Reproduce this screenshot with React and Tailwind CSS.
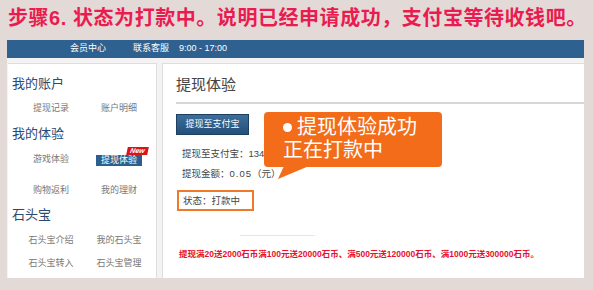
const font = { fontFamily: '"Liberation Sans", "Noto Sans CJK SC", sans-serif' };

function NavRow({ left, right, className = '' }) {
    return (
        <div className={`grid grid-cols-[68px_68px] ml-[9px] h-4 items-center text-[9px] text-[#777] ${className}`}>
            <div className="text-center">{left}</div>
            <div className="text-center">{right}</div>
        </div>
    );
}

function SideHeading({ children, className = '' }) {
    return <h3 className={`h-4 pl-[4px] text-[13px] leading-4 text-[#2c4a6e] ${className}`}>{children}</h3>;
}

export default function App() {
    return (
        <div style={font} className="w-[593px] h-[290px] bg-[#e3dad8] overflow-hidden">
            {/* 标题 */}
            <div className="h-10 pl-[8px] pt-[6px] text-[20px] leading-6 font-bold tracking-[0.55px] text-[#ea1c4f] whitespace-nowrap">
                步骤6. 状态为打款中。说明已经申请成功，支付宝等待收钱吧。
            </div>

            <div className="mx-[7px] w-[577px]">
                {/* 顶部蓝条 */}
                <div className="h-[18px] bg-[#2e6190] flex items-center pl-[63px] text-[9px] text-white">
                    <span>会员中心</span>
                    <span className="ml-[27px]">联系客服</span>
                    <span className="ml-[10px]">9:00 - 17:00</span>
                </div>

                <div className="bg-[#f4f2f2] pt-[5px] flex items-start">
                    {/* 左侧菜单 */}
                    <div className="w-[149px] ml-px bg-white border-t border-r border-[#dedede] pt-[12px] pb-[6px]">
                        <SideHeading>我的账户</SideHeading>
                        <NavRow className="mt-[9px]" left="提现记录" right="账户明细" />
                        <SideHeading className="mt-[9px]">我的体验</SideHeading>
                        <div className="grid grid-cols-[68px_68px] ml-[9px] h-4 items-center text-[9px] text-[#777] mt-[10px]">
                            <div className="text-center">游戏体验</div>
                            <div className="flex justify-center">
                                <span className="relative bg-[#2c5f8d] text-white w-[46px] h-[11px] leading-[11px] text-center">
                                    提现体验
                                    <span className="absolute left-[31px] -top-[8px] w-[21px] h-[8px] bg-[#d9131b] -skew-x-12 text-[7px] leading-[8px] font-bold italic text-white text-center">
                                        New
                                    </span>
                                </span>
                            </div>
                        </div>
                        <NavRow className="mt-[15px]" left="购物返利" right="我的理财" />
                        <SideHeading className="mt-[8px]">石头宝</SideHeading>
                        <NavRow className="mt-[10px]" left="石头宝介绍" right="我的石头宝" />
                        <NavRow className="mt-[7px]" left="石头宝转入" right="石头宝管理" />
                    </div>

                    {/* 右侧内容 */}
                    <div className="relative ml-[5px] flex-1 bg-white border-t border-l border-[#dedede] pl-[13px]">
                        <h2 className="mt-[11px] h-5 text-[15px] leading-5 text-[#444]">提现体验</h2>
                        <div className="mt-[7px] h-[2px] bg-[#d6d6d6]" />

                        <button className="mt-[10px] w-[73px] h-[21px] border border-[#1d3f60] bg-gradient-to-b from-[#3d6e9b] to-[#23507a] text-[9px] text-white">
                            提现至支付宝
                        </button>

                        <div className="ml-[6px] mt-[11px] h-4 leading-4 text-[9.5px] text-[#444]">提现至支付宝：134</div>
                        <div className="ml-[6px] mt-[4px] h-4 leading-4 text-[9.5px] text-[#444]">
                            提现金额：<span className="tracking-[1px]">0.05</span>（元）
                        </div>
                        <div className="ml-px mt-[8px] w-[77px] h-[21px] border-2 border-[#f07a2a] pl-[4px] text-[9.5px] leading-[17px] text-[#444]">
                            状态：打款中
                        </div>

                        <div className="ml-[64px] mt-[24px] w-[75px] h-px bg-[#e6e6e6]" />
                        <p className="ml-[3px] mt-[12px] text-[8.5px] leading-3 font-bold text-[#e8102a] whitespace-nowrap">
                            提现满20送2000石币满100元送20000石币、满500元送120000石币、满1000元送300000石币。
                        </p>
                        <div className="h-[18px]" />

                        {/* 提示气泡 */}
                        <div className="absolute left-[101px] top-[48px] w-[178px] h-[55px] rounded-[4px] bg-[#f26c1a] pl-[19px] pt-[4px] text-[20px] leading-[23px] text-white">
                            <div className="flex items-center">
                                <span className="w-[9px] h-[9px] rounded-full bg-white mr-[5px]" />
                                提现体验成功
                            </div>
                            <div>正在打款中</div>
                            <svg className="absolute left-[14px] top-[54px]" width="32" height="14" viewBox="0 0 32 14">
                                <polygon points="6,0 31,0 0,13" fill="#f26c1a" />
                            </svg>
                        </div>
                    </div>
                </div>
            </div>
        </div>
    );
}
